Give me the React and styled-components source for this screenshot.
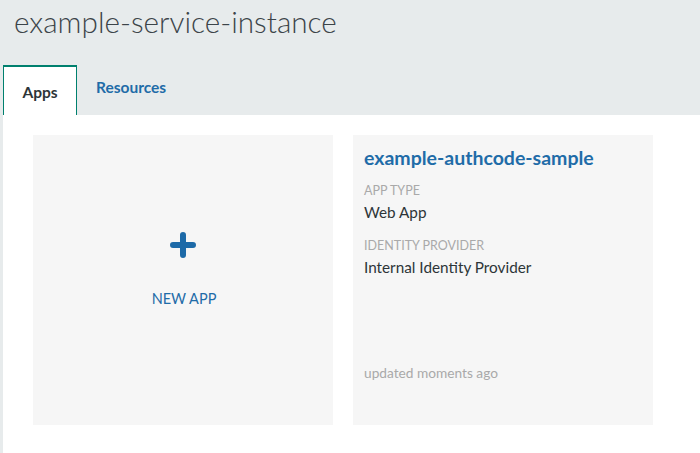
import React from "react";
import styled, { createGlobalStyle } from "styled-components";

const GlobalStyle = createGlobalStyle`
  html, body {
    margin: 0;
    padding: 0;
    background: #e7ebec;
    font-family: Lato, "Open Sans", sans-serif;
  }
`;

const Page = styled.div`
  width: 700px;
  height: 453px;
  display: flex;
  flex-direction: column;
  background: #e7ebec;
  overflow: hidden;
`;

const Title = styled.h1`
  margin: 0;
  padding: 4px 0 0 14px;
  height: 65px;
  box-sizing: border-box;
  font-size: 29.7px;
  line-height: 36px;
  font-weight: 300;
  color: #3c4449;
`;

const TabBar = styled.div`
  display: flex;
  padding-left: 3px;
  height: 50px;
  align-items: stretch;
`;

const Tab = styled.div`
  width: ${p => (p.$active ? "74px" : "auto")};
  padding: ${p => (p.$active ? "2px 0 0" : "0 19px")};
  box-sizing: border-box;
  display: flex;
  align-items: center;
  justify-content: center;
  font-size: 15.5px;
  font-weight: 700;
  color: ${p => (p.$active ? "#2d3538" : "#1f6ca8")};
  background: ${p => (p.$active ? "#fff" : "transparent")};
  border: ${p => (p.$active ? "1px solid #00806e" : "none")};
  border-top-width: ${p => (p.$active ? "2px" : "0")};
  border-bottom: none;
  margin-top: ${p => (p.$active ? "0" : "-7px")};
`;

const Content = styled.div`
  flex: 1;
  margin-left: 3px;
  background: #fff;
  display: flex;
  gap: 20px;
  padding: 20px 0 0 30px;
`;

const Card = styled.div`
  width: 300px;
  height: 290px;
  background: #f6f6f6;
  box-sizing: border-box;
  display: flex;
  flex-direction: column;
  padding: ${p => (p.$center ? "0 0 8px" : "11px 11px")};
  align-items: ${p => (p.$center ? "center" : "stretch")};
  justify-content: ${p => (p.$center ? "center" : "flex-start")};
`;

const NewLabel = styled.div`
  margin-top: 32px;
  margin-left: 2px;
  font-size: 14.5px;
  color: #1f6ca8;
`;

const PlusIcon = styled.svg`
  margin-top: -14px;
`;

const AppName = styled.div`
  font-size: 19.5px;
  font-weight: 700;
  color: #1f6ca8;
  margin-bottom: 14px;
`;

const FieldLabel = styled.div`
  font-size: 12.5px;
  color: #a9a9a9;
  text-transform: uppercase;
  margin-bottom: 5px;
`;

const FieldValue = styled.div`
  font-size: 15.3px;
  color: #2d3538;
  margin-bottom: 17px;
`;

const Updated = styled.div`
  margin-top: auto;
  margin-bottom: 33px;
  font-size: 13.7px;
  color: #a9a9a9;
`;

export default function App() {
  return (
    <Page>
      <GlobalStyle />
      <Title>example-service-instance</Title>
      <TabBar>
        <Tab $active>Apps</Tab>
        <Tab>Resources</Tab>
      </TabBar>
      <Content>
        <Card $center>
          <PlusIcon width="26" height="26" viewBox="0 0 26 26">
            <path d="M13 3 V23 M3 13 H23" stroke="#1d6aa8" strokeWidth="6" strokeLinecap="round" />
          </PlusIcon>
          <NewLabel>NEW APP</NewLabel>
        </Card>
        <Card>
          <AppName>example-authcode-sample</AppName>
          <FieldLabel>App Type</FieldLabel>
          <FieldValue>Web App</FieldValue>
          <FieldLabel>Identity Provider</FieldLabel>
          <FieldValue>Internal Identity Provider</FieldValue>
          <Updated>updated moments ago</Updated>
        </Card>
      </Content>
    </Page>
  );
}
